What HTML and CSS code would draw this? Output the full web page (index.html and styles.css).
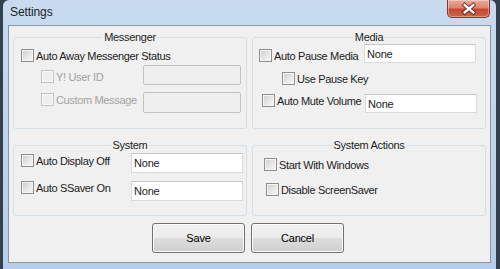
FILE: index.html
```html
<!DOCTYPE html>
<html lang="en">
<head>
  <meta charset="UTF-8" />
  <title>Settings</title>
  <meta name="viewport" content="width=device-width, initial-scale=1.0" />
  <link rel="stylesheet" href="styles.css">
</head>
<body>

  <div class="win-window">
    <div class="win-titlebar">
      <span class="win-title">Settings</span>
      <button class="win-close" aria-label="Close">
        <svg width="43" height="18" viewBox="0 0 43 18">
          <path d="M17.5 5 L26.5 12.5 M26.5 5 L17.5 12.5" stroke="#4b2a22" stroke-opacity="0.75" stroke-width="4.6" stroke-linecap="square" fill="none"/>
          <path d="M17.5 5 L26.5 12.5 M26.5 5 L17.5 12.5" stroke="#fff" stroke-width="2.4" stroke-linecap="square" fill="none"/>
        </svg>
      </button>
    </div>

    <div class="win-client">
      <div class="win-groups">

        <!-- Messenger -->
        <fieldset class="win-group top messenger">
          <legend>Messenger</legend>
          <div class="win-row m1">
            <label class="win-check"><input type="checkbox" class="win-cb">Auto Away Messenger Status</label>
          </div>
          <div class="win-row m2">
            <label class="win-check disabled"><input type="checkbox" class="win-cb" disabled>Y! User ID</label>
            <input type="text" class="win-text msg" disabled>
          </div>
          <div class="win-row m3">
            <label class="win-check disabled"><input type="checkbox" class="win-cb" disabled>Custom Message</label>
            <input type="text" class="win-text msg tall" disabled>
          </div>
        </fieldset>

        <!-- Media -->
        <fieldset class="win-group top media">
          <legend>Media</legend>
          <div class="win-row d1">
            <label class="win-check"><input type="checkbox" class="win-cb">Auto Pause Media</label>
            <input type="text" class="win-text wide short" value="None">
          </div>
          <div class="win-row d2">
            <label class="win-check"><input type="checkbox" class="win-cb">Use Pause Key</label>
          </div>
          <div class="win-row d3">
            <label class="win-check"><input type="checkbox" class="win-cb">Auto Mute Volume</label>
            <input type="text" class="win-text wide short" value="None">
          </div>
        </fieldset>

        <!-- System -->
        <fieldset class="win-group bottom system">
          <legend>System</legend>
          <div class="win-row s1">
            <label class="win-check"><input type="checkbox" class="win-cb">Auto Display Off</label>
            <input type="text" class="win-text wide" value="None">
          </div>
          <div class="win-row s2">
            <label class="win-check"><input type="checkbox" class="win-cb">Auto SSaver On</label>
            <input type="text" class="win-text wide" value="None">
          </div>
        </fieldset>

        <!-- System Actions -->
        <fieldset class="win-group bottom actions">
          <legend>System Actions</legend>
          <div class="win-row a1">
            <label class="win-check"><input type="checkbox" class="win-cb">Start With Windows</label>
          </div>
          <div class="win-row a2">
            <label class="win-check"><input type="checkbox" class="win-cb">Disable ScreenSaver</label>
          </div>
        </fieldset>

      </div>

      <div class="win-buttons">
        <button class="win-btn">Save</button>
        <button class="win-btn">Cancel</button>
      </div>
    </div>
  </div>

</body>
</html>
```

FILE: styles.css
```css
:root {
  --win-frame-top: #c8dbef;
  --win-frame-bottom: #b6cee9;
  --win-client-bg: #f0f0f0;
  --win-group-border: #d5dfe5;
  --win-text: #222;
  --win-disabled: #a3a3a3;
}

body {
  margin: 0;
  background: #34404e;
  font-family: "Liberation Sans", Arial, sans-serif;
  font-size: 11px;
  color: var(--win-text);
}

.win-window {
  margin-left: 3px;
  width: 493px;
  height: 269px;
  box-sizing: border-box;
  background: linear-gradient(to bottom, var(--win-frame-top), var(--win-frame-bottom));
  border-radius: 6px 6px 0 0;
}

.win-titlebar {
  display: flex;
  justify-content: space-between;
  align-items: flex-start;
  height: 25px;
}

.win-title {
  margin: 5px 0 0 7px;
  font-size: 12px;
  line-height: 15px;
  letter-spacing: -0.1px;
  color: #1e1e1e;
}

.win-close {
  margin-right: 6px;
  width: 43px;
  height: 18px;
  padding: 0;
  border: 1px solid #8c3424;
  border-top: none;
  border-radius: 0 0 5px 5px;
  background: linear-gradient(to bottom, #e9aa9b 0%, #dc8470 45%, #c6472f 55%, #d0624a 100%);
  box-shadow: inset 0 0 0 1px rgba(255,255,255,0.35);
  display: flex;
}

.win-client {
  margin-left: 5px;
  width: 483px;
  height: 238px;
  box-sizing: border-box;
  border: 1px solid #8796a6;
  background: var(--win-client-bg);
}

.win-groups {
  display: grid;
  grid-template-columns: 234px 234px;
  column-gap: 5px;
  row-gap: 10px;
  padding: 5px 0 0 4px;
}

.win-group {
  margin: 0;
  padding: 0;
  min-width: 0;
  box-sizing: border-box;
  border: 1px solid var(--win-group-border);
  border-radius: 3px;
}

.win-group.top { height: 98px; }
.win-group.bottom { height: 77px; }

.win-group legend {
  margin: 0 auto;
  padding: 0 2px;
  line-height: 13px;
  letter-spacing: -0.3px;
  color: #1e1e1e;
}

.win-row {
  display: flex;
  align-items: flex-start;
}

.win-check {
  display: flex;
  align-items: center;
  height: 13px;
  letter-spacing: -0.35px;
  white-space: nowrap;
}

.win-check.disabled {
  color: var(--win-disabled);
}

.win-cb {
  appearance: none;
  margin: 0 2px 0 0;
  width: 13px;
  height: 13px;
  box-sizing: border-box;
  border: 1px solid #8e8f8f;
  background: linear-gradient(135deg, #c9ccd1 0%, #e9eaeb 60%, #f7f7f7 100%);
  box-shadow: inset 0 0 0 1px #f4f4f4;
}

.win-cb:disabled {
  border-color: #c4c4c4;
  background: #eeeeee;
  box-shadow: inset 0 0 0 1px #f7f7f7;
}

.win-text {
  margin-left: auto;
  height: 20px;
  box-sizing: border-box;
  padding: 0 2px;
  border: 1px solid #dadada;
  border-top-color: #c6c6c6;
  background: #fff;
  font-family: inherit;
  font-size: 11px;
  letter-spacing: -0.2px;
  color: var(--win-text);
  outline: none;
}

.win-text:disabled {
  border: 1px solid #c2c2c2;
  border-radius: 2px;
  background: #efefef;
}

.win-text.msg { width: 98px; }
.win-text.msg.tall { height: 21px; }
.win-text.wide { width: 112px; }
.win-text.short { height: 19px; }

/* Messenger rows */
.m1 { margin-top: 5px; padding-left: 7px; }
.m2 { margin-top: 3px; padding-left: 27px; padding-right: 5px; }
.m2 .win-check { margin-top: 5px; }
.m3 { margin-top: 7px; padding-left: 27px; padding-right: 5px; }
.m3 .win-check { margin-top: 1px; }

/* Media rows */
.d1 { padding-left: 6px; padding-right: 9px; }
.d1 .win-check { margin-top: 5px; }
.d2 { margin-top: 9px; padding-left: 29px; }
.d3 { margin-top: 9px; padding-left: 9px; padding-right: 8px; }

/* System rows */
.s1 { margin-top: 1px; padding-left: 7px; padding-right: 3px; }
.s1 .win-check { margin-top: 1px; }
.s2 { margin-top: 8px; padding-left: 7px; padding-right: 3px; }

/* System Actions rows */
.a1 { margin-top: 6px; padding-left: 11px; }
.a2 { margin-top: 12px; padding-left: 13px; }

.win-buttons {
  display: flex;
  justify-content: center;
  gap: 6px;
  margin-top: 7px;
  padding-right: 3px;
}

.win-btn {
  width: 93px;
  height: 30px;
  padding: 0;
  border: 1px solid #707070;
  border-radius: 3px;
  background: linear-gradient(to bottom, #f2f2f2 0%, #ebebeb 50%, #dddddd 51%, #cfcfcf 100%);
  box-shadow: inset 0 0 0 1px #fcfcfc;
  font-family: inherit;
  font-size: 11px;
  letter-spacing: -0.2px;
  color: #000;
}
```
